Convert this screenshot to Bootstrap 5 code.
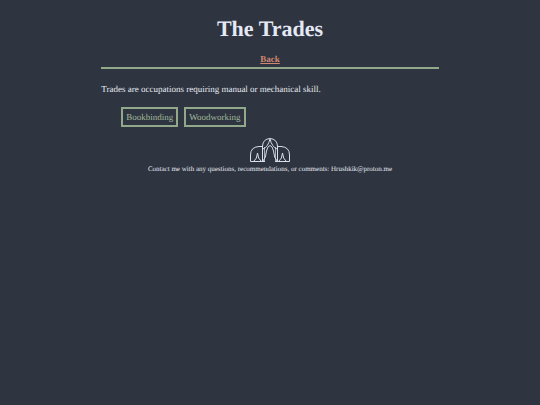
<!DOCTYPE html>
<html lang="en">
<head>
<meta charset="utf-8">
<meta name="viewport" content="width=device-width, initial-scale=1">
<title>The Trades</title>
<link rel="stylesheet" href="https://cdn.jsdelivr.net/npm/bootstrap@5.3.0/dist/css/bootstrap.min.css">
<style>
body { background: #2e3440; color: #e5e9f0; font-family: "Liberation Serif", "Times New Roman", serif; font-size: 9px; line-height: 12px; text-rendering: geometricPrecision; }
.page { width: 62.5%; }
.page-head { border-bottom: 2px solid #92a88a; padding-top: 16px; padding-bottom: 2px; }
.page-title { font-size: 22px; line-height: 26px; color: #e5e9f5; margin-bottom: 11px; }
.back-link, .back-link:hover { color: #d08770; }
.intro { margin: 14px 0 12px; }
.trades { padding-left: 20px; gap: 6px; }
.trade, .trade:hover { color: #a0b898; border: 2px solid #92a88a; padding: 2px 3px; }
.page-foot { margin-top: 10px; font-size: 7px; line-height: 12px; }
.emblem { width: 42px; height: 26px; }
</style>
</head>
<body>
<div class="page mx-auto">
  <header class="page-head text-center">
    <h1 class="page-title fw-bold">The Trades</h1>
    <nav><a class="back-link fw-bold" href="#">Back</a></nav>
  </header>
  <main>
    <p class="intro">Trades are occupations requiring manual or mechanical skill.</p>
    <nav class="trades d-flex flex-wrap" aria-label="Trades">
      <a class="trade text-decoration-none" href="#">Bookbinding</a>
      <a class="trade text-decoration-none" href="#">Woodworking</a>
    </nav>
  </main>
  <footer class="page-foot text-center">
    <svg class="emblem d-block mx-auto" viewBox="0 0 42 26" fill="none" stroke="#d8dee9" stroke-width="1" aria-hidden="true">
      <path d="M13 9.500H10Q1.500 10 1.500 18V24.500H16M26 24.500H40.500V18Q40.500 10 32 9.500H29"/>
      <path d="M13.500 24.500V9Q14 2 21 1.500Q28 2 28.500 9V24.500"/>
      <path d="M15.500 24V10M26.500 10V24" stroke-opacity=".7"/>
      <path d="M14 12Q19 10 21 2Q23 10 28 12"/>
      <path d="M14 24Q17 21 17.500 14Q18.500 9 21 8.500Q23.500 9 24.500 14Q25 21 28 24"/>
      <path d="M5 24Q8 22 8.500 16Q9 22 12 24M30 24Q33 22 33.500 16Q34 22 37 24"/>
    </svg>
    <p class="mb-0">Contact me with any questions, recommendations, or comments: Hrushkik@proton.me</p>
  </footer>
</div>
<script src="https://cdn.jsdelivr.net/npm/bootstrap@5.3.0/dist/js/bootstrap.bundle.min.js"></script>
</body>
</html>
